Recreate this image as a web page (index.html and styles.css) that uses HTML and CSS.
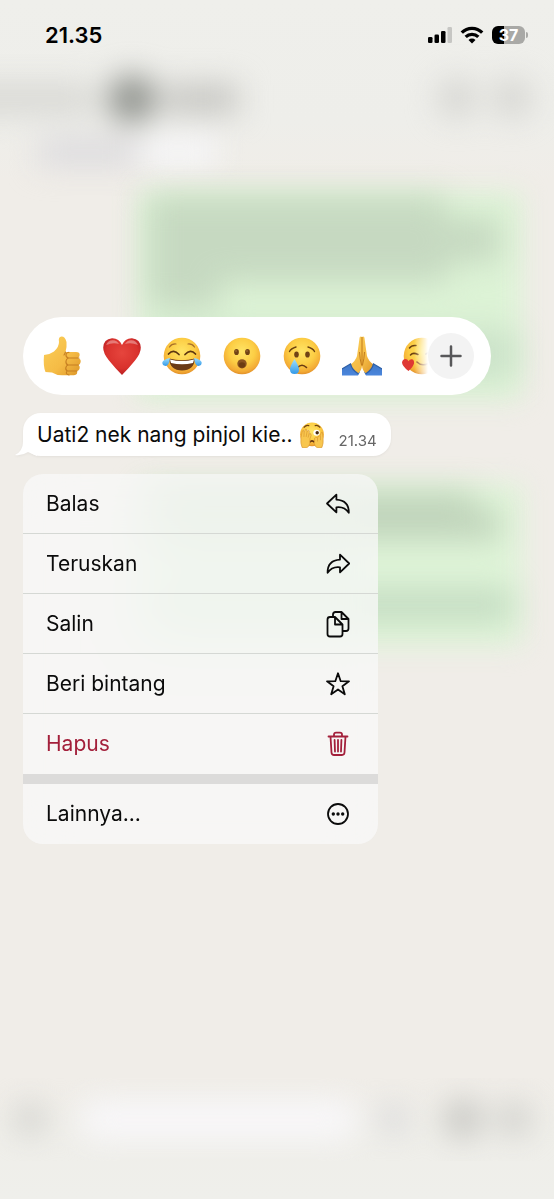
FILE: index.html
```html
<!DOCTYPE html>
<html lang="id">
<head>
<meta charset="utf-8">
<meta name="viewport" content="width=device-width, initial-scale=1">
<title>Chat</title>
<link rel="stylesheet" href="styles.css">
</head>
<body>
<svg class="defs" width="0" height="0" aria-hidden="true">
  <defs>
    <radialGradient id="face" cx=".5" cy=".38" r=".64">
      <stop offset="0" stop-color="#ffe566"/><stop offset=".55" stop-color="#fccd44"/><stop offset=".85" stop-color="#f3ab35"/><stop offset="1" stop-color="#dd8a27"/>
    </radialGradient>
    <linearGradient id="skin" x1="0" y1="0" x2="1" y2="1">
      <stop offset="0" stop-color="#fbd05a"/><stop offset=".6" stop-color="#f5bb45"/><stop offset="1" stop-color="#dc9628"/>
    </linearGradient>
    <radialGradient id="heart" cx=".5" cy=".4" r=".6">
      <stop offset="0" stop-color="#e6453d"/><stop offset=".7" stop-color="#d9322d"/><stop offset="1" stop-color="#b81e22"/>
    </radialGradient>
    <linearGradient id="tear" x1="0" y1="0" x2="0" y2="1">
      <stop offset="0" stop-color="#9fe0ff"/><stop offset="1" stop-color="#3399e8"/>
    </linearGradient>
    <linearGradient id="sleeve" x1="0" y1="0" x2="0" y2="1">
      <stop offset="0" stop-color="#3f78c8"/><stop offset="1" stop-color="#4b86dc"/>
    </linearGradient>
  </defs>
</svg>

<svg class="backdrop" viewBox="0 0 554 1199" preserveAspectRatio="none" aria-hidden="true">
  <defs>
    <filter id="soft" x="-30%" y="-50%" width="160%" height="200%" color-interpolation-filters="sRGB"><feGaussianBlur stdDeviation="15"/></filter>
    <filter id="edge" x="-30%" y="-30%" width="160%" height="160%" color-interpolation-filters="sRGB"><feGaussianBlur stdDeviation="13"/></filter>
    <linearGradient id="wall" x1="0" y1="0" x2="0" y2="1">
      <stop offset="0" stop-color="#efefeb"/><stop offset=".1" stop-color="#eeeeea"/><stop offset=".15" stop-color="#f0ede8"/><stop offset=".9" stop-color="#f0ede8"/><stop offset=".94" stop-color="#efeee9"/><stop offset="1" stop-color="#efefeb"/>
    </linearGradient>
  </defs>
  <rect width="554" height="1199" fill="url(#wall)"/>
  <g filter="url(#soft)">
    <rect x="-40" y="84" width="134" height="30" fill="#d8d8d4"/>
    <circle cx="132" cy="99" r="24" fill="#8f928d"/>
    <rect x="164" y="84" width="74" height="30" fill="#c6c6c2"/>
    <circle cx="457" cy="98" r="20" fill="#d6d6d2"/>
    <circle cx="512" cy="98" r="20" fill="#d6d6d2"/>
    <rect x="38" y="138" width="100" height="28" fill="#dcdbde"/>
    <rect x="142" y="136" width="74" height="30" fill="#f6f6f8"/>
  </g>
  <g filter="url(#edge)">
    <path d="M138 192H522V400H138Z" fill="#ddf3d6"/>
    <path d="M138 484H522V646H138Z" fill="#dff4d8"/>
  </g>
  <g filter="url(#soft)">
    <path d="M148 196H446V218H500V262H448V282H220V308H148Z" fill="#c6d9c1"/>
    <path d="M148 330H516V378H148Z" fill="#cbe2c9"/>
    <path d="M148 492H474V510H500V540H148Z" fill="#c0d4bb"/>
    <path d="M148 588H512V622H148Z" fill="#c5ddc3"/>
  </g>
  <g filter="url(#soft)">
    <circle cx="30" cy="1119" r="16" fill="#d2d2ce"/>
    <rect x="80" y="1100" width="278" height="40" rx="18" fill="#f8f7f9"/>
    <circle cx="394" cy="1119" r="14" fill="#d8d8da"/>
    <circle cx="463" cy="1119" r="20" fill="#c8c8c4"/>
    <circle cx="514" cy="1119" r="17" fill="#cfcfcb"/>
  </g>
</svg>

<div class="screen">
  <header class="status">
    <time class="clock">21.35</time>
    <div class="indicators">
      <svg class="signal" viewBox="0 0 24 18" role="img" aria-label="Sinyal">
        <rect x="0" y="11" width="4.500" height="6" rx="1.300"/><rect x="6.500" y="8.500" width="4.500" height="8.500" rx="1.300"/><rect x="13" y="5" width="4.500" height="12" rx="1.300"/><rect x="19.500" y="1" width="4.500" height="16" rx="1.300" fill="#c6c6c3"/>
      </svg>
      <svg class="wifi" viewBox="0 0 24 18" role="img" aria-label="Wi-Fi">
        <g fill="none" stroke="#000" stroke-width="3.300"><path d="M1.800 6.600A14.300 14.300 0 0 1 22.200 6.600"/><path d="M5.700 10.900A9 9 0 0 1 18.300 10.900"/></g>
        <path d="M8.500 14A5 5 0 0 1 15.500 14L12 17.500Z"/>
      </svg>
      <div class="battery"><span class="level">37</span></div>
    </div>
  </header>

  <main class="focus">
    <div class="reactions">
      <div class="emoji-strip">
        <button class="emoji" aria-label="Jempol"><svg viewBox="0 0 40 40">
          <path d="M2 19Q8 18.500 12 15.500Q17 11 17 6Q16 1 19.500.6Q23 .5 24.500 6Q25 11 23.500 16H34Q38 16 37.600 19.200Q37.500 21 36 22Q39.500 23 38.500 26.500Q38 28.500 36.500 29Q38.500 30.500 37.500 33Q36.500 35 35 35Q36 39 32 39.200H20Q14 39.200 10 36.500L3.500 36Q1 30 2 19Z" fill="url(#skin)"/>
          <path d="M37 22H26.500Q23.500 21 24 18.500Q24.500 16.500 27 16.200M36.500 29H26Q23.500 28 24 25Q24.200 23 26.500 22M35 35H25.500Q23 34 24 31Q24.500 29.200 26.500 29M27 39Q23 38 25 35M23.500 16Q22.800 18 22 19" fill="none" stroke="#c67f22" stroke-width="1.100" stroke-linecap="round"/>
        </svg></button>
        <button class="emoji" aria-label="Hati"><svg viewBox="0 0 40 40">
          <path d="M20 39Q13 32 7 24.500Q1 17 1.200 11.500Q1.500 3.200 10 2.200Q17 2 20 9Q23 2 30 2.200Q38.500 3.200 38.800 11.500Q39 17 33 24.500Q27 32 20 39Z" fill="url(#heart)"/>
          <path d="M4 9Q6 4 11 4.200Q15 4.500 17 8Q11 6 4 9ZM23 8Q25 4.500 29 4.200Q34 4 36 9Q29 6 23 8Z" fill="#fff" opacity=".35"/>
        </svg></button>
        <button class="emoji" aria-label="Tertawa"><svg viewBox="0 0 40 40">
          <circle cx="20" cy="20" r="18.300" fill="url(#face)"/>
          <path d="M7.500 11Q10 7.500 14 8M26 8Q30 7.500 32.500 11" fill="none" stroke="#a9702a" stroke-width="1.200" stroke-linecap="round"/>
          <path d="M6.500 18Q11.500 12.500 17 18.500M23 18.500Q28.500 12.500 33.500 18" fill="none" stroke="#5c3510" stroke-width="1.700" stroke-linecap="round"/>
          <path d="M7 22.500Q20 26 33 22.500Q32 34.500 20 34.500Q8 34.500 7 22.500Z" fill="#6b3a15"/>
          <path d="M8 23.500Q20 26.500 32 23.500L31 27Q20 29.500 9 27Z" fill="#fff"/>
          <path d="M8 22Q7 30 3.500 30Q.2 29.500.3 26.500Q1 23.500 8 22ZM32 22Q33 30 36.500 30Q39.800 29.500 39.700 26.500Q39 23.500 32 22Z" fill="url(#tear)"/>
        </svg></button>
        <button class="emoji" aria-label="Terkejut"><svg viewBox="0 0 40 40">
          <circle cx="20" cy="20" r="18.300" fill="url(#face)"/>
          <ellipse cx="14.500" cy="16" rx="2.400" ry="3.100" fill="#704315"/><ellipse cx="25.500" cy="16" rx="2.400" ry="3.100" fill="#704315"/>
          <circle cx="14" cy="15" r=".8" fill="#a8763e"/><circle cx="25" cy="15" r=".8" fill="#a8763e"/>
          <ellipse cx="20" cy="27.800" rx="4.700" ry="4.600" fill="#8a5320"/><ellipse cx="20" cy="29" rx="3.200" ry="2.800" fill="#6d3c12"/>
        </svg></button>
        <button class="emoji" aria-label="Sedih"><svg viewBox="0 0 40 40">
          <circle cx="20" cy="20" r="18.300" fill="url(#face)"/>
          <path d="M7.500 15.500Q9 12.500 14 11M26 11Q31 12.500 32.500 15.500" fill="none" stroke="#6b400f" stroke-width="1.400" stroke-linecap="round"/>
          <ellipse cx="14.500" cy="18.500" rx="2.300" ry="3.100" fill="#704315"/><ellipse cx="25.500" cy="18.500" rx="2.300" ry="3.100" fill="#704315"/>
          <path d="M15.500 31.500Q20 27 24.500 31.500" fill="none" stroke="#6b3b12" stroke-width="1.600" stroke-linecap="round"/>
          <path d="M12.500 23Q17 30 17 33.500Q17 38 12.500 38Q8 38 8 33.500Q8 30 12.500 23Z" fill="url(#tear)"/>
        </svg></button>
        <button class="emoji" aria-label="Terima kasih"><svg viewBox="0 0 40 40">
          <path d="M0 33L9 28L18 36L16 39.500H0ZM40 33L31 28L22 36L24 39.500H40Z" fill="url(#sleeve)"/>
          <path d="M20 1Q18.600-.2 17.600 1.500Q16.500 10 15 20Q13.500 25 8.500 28.500Q11 35 16 37.500Q19.500 35 20 30Q20.500 35 24 37.500Q29 35 31.500 28.500Q26.500 25 25 20Q23.500 10 22.400 1.500Q21.400-.2 20 1Z" fill="url(#skin)"/>
          <path d="M20 1V30M17.500 16Q17.800 23 19.500 29M22.500 16Q22.200 23 20.500 29" fill="none" stroke="#c27c1d" stroke-width="1"/>
          <path d="M0 33L8.500 28Q10 34 16.500 38M40 33L31.500 28Q30 34 23.500 38" fill="none" stroke="#2c5fa8" stroke-width="1.200"/>
        </svg></button>
        <button class="emoji" aria-label="Sayang"><svg viewBox="0 0 40 40">
          <circle cx="20" cy="20" r="18.300" fill="url(#face)"/>
          <path d="M7.500 12Q9.500 9 14 9.500M8.500 19Q11 16 16 18.500M24 18Q28 15 31 18.500" fill="none" stroke="#6b400f" stroke-width="1.500" stroke-linecap="round"/>
          <path d="M15 26Q20 31 27 27" fill="none" stroke="#8a4c14" stroke-width="1.600" stroke-linecap="round"/>
          <path d="M6.500 35Q0 30 0 26.500Q.5 23 3.500 23Q5.500 23 6.500 25.200Q7.500 23 10 23.200Q12.500 24 12 27.500Q11 31 6.500 35Z" fill="#df3833"/>
        </svg></button>
      </div>
      <button class="more" aria-label="Emoji lain"><svg viewBox="0 0 24 24"><path d="M12 2.500V21.500M2.500 12H21.500" stroke="#58585a" stroke-width="2.500" stroke-linecap="round"/></svg></button>
    </div>

    <article class="bubble">
      <svg class="tail" viewBox="0 0 22 20" aria-hidden="true"><path d="M8 0V6Q8 15 0 19Q7 20 13 16L22 20V0Z" fill="#fff"/></svg>
      <p class="message">Uati2 nek nang pinjol kie..</p>
      <svg class="peek" viewBox="0 0 40 40" role="img" aria-label="Mengintip">
        <circle cx="20" cy="19" r="18.300" fill="url(#face)"/>
        <path d="M8 8Q11 4.500 15 5.500M25 5.500Q29 4.500 32 8" fill="none" stroke="#704315" stroke-width="2" stroke-linecap="round"/>
        <ellipse cx="12" cy="17" rx="5" ry="5" fill="#fff3d0"/>
        <ellipse cx="27" cy="16.500" rx="5" ry="4.500" fill="#fff"/><circle cx="28" cy="16.500" r="2.600" fill="#4a2b0d"/>
        <path d="M16.500 31Q20 27 23.500 31" fill="none" stroke="#603010" stroke-width="2.500"/>
        <path d="M3 24L5 14Q7 11 8 15L10 11Q12 10 12.500 14L15 13Q17 14 15.500 18L18 18Q20 20 17 25L16.500 33Q16 38 12 39.500H5Q2 34 3 24ZM37 24L36 16Q34 14 33 20L31 22Q28.500 21 28.500 25L26 23Q23 24 24 28L23.500 33Q24 38 28 39.500H35Q38 34 37 24Z" fill="#f8c64e" stroke="#d8942f" stroke-width="1"/>
        <path d="M8 15L7.500 23M12.500 14L11 23M15.500 18L14 24M33 21V28M28.500 25V30" stroke="#d8942f" stroke-width="1"/>
      </svg>
      <time class="sent">21.34</time>
    </article>

    <div class="menu" role="menu">
      <button class="item" role="menuitem"><span>Balas</span><svg class="icon" viewBox="0 0 28 28"><path d="M12.400 4.700L3 13.500L12.400 22.300V17.300Q20.500 16.300 24.800 22.800Q25 10.300 12.400 9.600Z"/></svg></button>
      <button class="item" role="menuitem"><span>Teruskan</span><svg class="icon" viewBox="0 0 28 28"><path d="M16 4.700L25.200 13.500L16 22.300V17.300Q7.900 16.300 3.600 22.800Q3.400 10.300 16 9.600Z"/></svg></button>
      <button class="item" role="menuitem"><span>Salin</span><svg class="icon" viewBox="0 0 28 28"><path d="M9 6.500V4.500Q9 2 11.500 2H17.500L24.500 9V18.500Q24.500 21 22 21H19.500M17.500 2V9H24.500M6 7H11L18.500 14.500V24Q18.500 26.500 16 26.500H6Q3.500 26.500 3.500 24V9.500Q3.500 7 6 7ZM11 7V14.500H18.500"/></svg></button>
      <button class="item" role="menuitem"><span>Beri bintang</span><svg class="icon" viewBox="0 0 28 28"><path d="M14 3.300L16.700 11.200L25 11.300L18.400 16.300L20.800 24.300L14 19.500L7.200 24.300L9.600 16.300L3 11.300L11.300 11.200Z"/></svg></button>
      <button class="item danger" role="menuitem"><span>Hapus</span><svg class="icon" viewBox="0 0 28 28"><path d="M4.500 6.500H23.500M10 6V4.500Q10 2.600 12 2.600H16Q18 2.600 18 4.500V6M6.500 6.500L7.500 22.500Q7.700 25 10 25H18Q20.300 25 20.500 22.500L21.500 6.500M10.600 10L11 21.500M14 10V21.500M17.400 10L17 21.500"/></svg></button>
      <button class="item last" role="menuitem"><span>Lainnya...</span><svg class="icon" viewBox="0 0 28 28"><circle cx="14" cy="14" r="10"/><g fill="currentColor" stroke="none"><circle cx="9.300" cy="14" r="1.700"/><circle cx="14" cy="14" r="1.700"/><circle cx="18.700" cy="14" r="1.700"/></g></svg></button>
    </div>
  </main>
</div>
</body>
</html>
```
FILE: styles.css
```css
* { box-sizing: border-box; }

body {
  position: relative;
  margin: 0;
  min-height: 100vh;
  background: #f0ede8;
  color: #0b0b0b;
  font-family: Inter, "Liberation Sans", sans-serif;
}

button {
  margin: 0;
  padding: 0;
  border: 0;
  background: none;
  color: inherit;
  font: inherit;
  cursor: pointer;
}

svg { display: block; }

.defs { position: absolute; }

.backdrop {
  position: absolute;
  inset: 0;
  width: 100%;
  height: 100%;
}

.screen { position: relative; }

.status {
  display: flex;
  align-items: center;
  justify-content: space-between;
  height: 70px;
  padding: 0 26px 0 45px;
  color: #000;
}

.clock {
  font-size: 22px;
  font-weight: 600;
  line-height: 28px;
}

.indicators {
  display: flex;
  align-items: center;
  gap: 8px;
}

.signal,
.wifi {
  width: 24px;
  height: 18px;
}

.battery {
  display: flex;
  align-items: center;
  gap: 1px;
}

.level {
  width: 33px;
  border-radius: 6px;
  background: linear-gradient(90deg, #000 36%, #a9a9a6 36%);
  color: #fff;
  font-size: 16px;
  font-weight: 700;
  line-height: 18px;
  text-align: center;
}

.battery::after {
  content: "";
  width: 2px;
  height: 6px;
  border-radius: 0 2px 2px 0;
  background: #a9a9a6;
}

.focus {
  display: flex;
  flex-direction: column;
  align-items: flex-start;
  gap: 18px;
  padding: 247px 23px 40px;
}

.reactions {
  display: flex;
  align-items: center;
  width: 100%;
  max-width: 468px;
  height: 78px;
  padding: 0 17px 0 19px;
  border-radius: 39px;
  background: #fff;
}

.emoji-strip {
  display: flex;
  flex: 1;
  gap: 20px;
  min-width: 0;
  overflow: hidden;
  mask-image: linear-gradient(90deg, #000 calc(100% - 14px), transparent);
}

.emoji {
  flex: none;
  width: 40px;
  height: 40px;
}

.more {
  display: grid;
  flex: none;
  place-items: center;
  width: 46px;
  height: 46px;
  border-radius: 50%;
  background: #f3f3f3;
}

.more svg {
  width: 24px;
  height: 24px;
}

.bubble {
  position: relative;
  display: flex;
  align-items: center;
  height: 43px;
  padding: 0 14px;
  border-radius: 18px;
  background: #fff;
  filter: drop-shadow(0 1px 1px rgba(0, 0, 0, 0.05));
}

.tail {
  position: absolute;
  bottom: 0;
  left: -8px;
  width: 22px;
  height: 20px;
}

.message {
  margin: 0 6px 0 0;
  font-size: 21px;
  line-height: 28px;
}

.peek {
  width: 26px;
  height: 26px;
  margin-right: 14px;
}

.sent {
  align-self: flex-end;
  padding-bottom: 6px;
  color: #666;
  font-size: 15px;
  line-height: 18px;
}

.menu {
  width: 100%;
  max-width: 355px;
  overflow: hidden;
  border-radius: 20px;
  background: rgba(248, 248, 248, 0.76);
  backdrop-filter: blur(24px);
}

.item {
  display: flex;
  align-items: center;
  justify-content: space-between;
  width: 100%;
  height: 60px;
  padding: 0 26px 0 23px;
  border-bottom: 1px solid #d5d8d4;
  font-size: 21px;
  line-height: 28px;
  text-align: left;
}

.danger {
  border-bottom: 0;
  color: #a3203b;
}

.last {
  height: 70px;
  border-top: 10px solid #dcdbda;
  border-bottom: 0;
}

.icon {
  width: 28px;
  height: 28px;
  fill: none;
  stroke: currentColor;
  stroke-width: 1.8;
  stroke-linecap: round;
  stroke-linejoin: round;
}
```
